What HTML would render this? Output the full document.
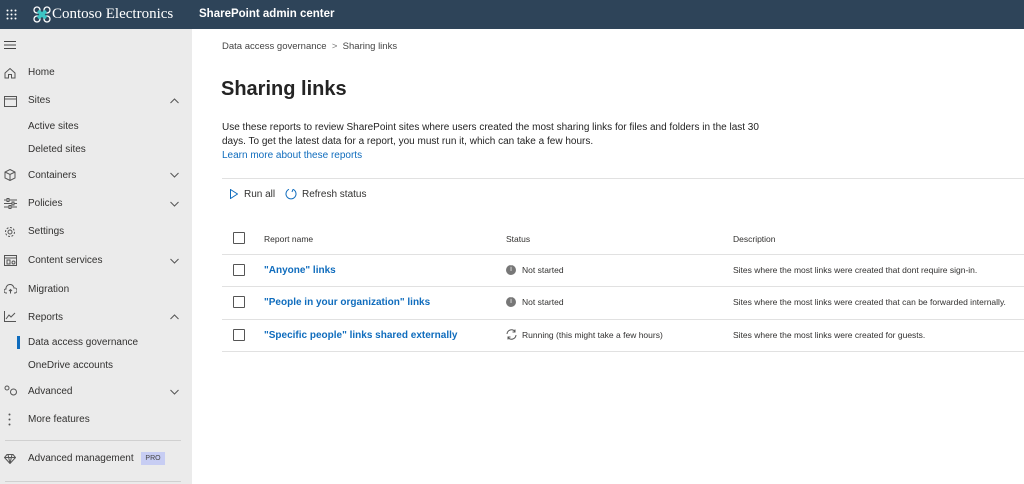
<html><head><style>
body{margin:0;width:1024px;height:484px;overflow:hidden;font-family:"Liberation Sans",sans-serif;background:#fff;position:relative}
.top{position:absolute;left:0;top:0;width:1024px;height:29px;background:#2e4459;color:#fff}
.side{position:absolute;left:0;top:29px;width:192px;height:455px;background:#ebebeb}
.a{position:absolute;white-space:nowrap}
.n{font-size:10px;color:#323130;left:28px}
.lk{color:#0f6cbd;font-weight:bold;font-size:10px;left:264px}
.cb{left:233px;width:10px;height:10px;border:1px solid #555;border-radius:1px}
.ln{left:222px;width:802px;height:1px;background:#e1e1e1}
.s{font-size:8.5px;color:#323130}
svg.i{position:absolute;left:4px}
</style></head><body>
<div class="top">
<svg class="a" style="left:6px;top:9px" width="11" height="11"><g fill="#fff"><circle cx="1.5" cy="1.5" r="1"/><circle cx="5.5" cy="1.5" r="1"/><circle cx="9.5" cy="1.5" r="1"/><circle cx="1.5" cy="5.5" r="1"/><circle cx="5.5" cy="5.5" r="1"/><circle cx="9.5" cy="5.5" r="1"/><circle cx="1.5" cy="9.5" r="1"/><circle cx="5.5" cy="9.5" r="1"/><circle cx="9.5" cy="9.5" r="1"/></g></svg>
<svg class="a" style="left:33px;top:6px" width="18" height="17" viewBox="0 0 18 17"><circle cx="4" cy="4" r="3" fill="none" stroke="#fff" stroke-width="1.3"/><circle cx="14" cy="4" r="3" fill="none" stroke="#fff" stroke-width="1.3"/><circle cx="4" cy="13" r="3" fill="none" stroke="#fff" stroke-width="1.3"/><circle cx="14" cy="13" r="3" fill="none" stroke="#fff" stroke-width="1.3"/><path d="M5 5L13 12M13 5L5 12" stroke="#3cc4c4" stroke-width="3.5"/></svg>
<div class="a" style="left:52px;top:6px;font-family:'Liberation Serif',serif;font-size:15px">Contoso Electronics</div>
<div class="a" style="left:199px;top:8px;font-size:11.5px;font-weight:bold">SharePoint admin center</div>
</div>
<div class="side"></div>
<svg class="i" style="top:41px" width="12" height="8"><path d="M0 .5H12M0 4H12M0 7.5H12" stroke="#444"/></svg>
<svg class="i" style="top:67px" width="12" height="12"><path d="M1 6L6 1.5 11 6V11H7.5V7.5H4.5V11H1Z" fill="none" stroke="#555"/></svg>
<div class="a n" style="top:67px">Home</div>
<svg class="i" style="top:96px" width="13" height="11"><rect x=".5" y=".5" width="12" height="10" fill="none" stroke="#555"/><path d="M.5 3H12.5" stroke="#555"/></svg>
<div class="a n" style="top:95px">Sites</div>
<div class="a n" style="top:121px">Active sites</div>
<div class="a n" style="top:144px">Deleted sites</div>
<svg class="i" style="top:169px" width="12" height="12"><path d="M6 .5L11 3V9L6 11.5 1 9V3Z M1 3L6 5.5 11 3M6 5.5V11.5" fill="none" stroke="#555"/></svg>
<div class="a n" style="top:170px">Containers</div>
<svg class="i" style="top:198px" width="13" height="11"><path d="M0 2H13M0 5.5H13M0 9H13" stroke="#555"/><rect x="3" y="0.5" width="2" height="3" fill="#ebebeb" stroke="#555"/><rect x="8" y="4" width="2" height="3" fill="#ebebeb" stroke="#555"/><rect x="5" y="7.5" width="2" height="3" fill="#ebebeb" stroke="#555"/></svg>
<div class="a n" style="top:198px">Policies</div>
<svg class="i" style="top:226px" width="12" height="12"><circle cx="6" cy="6" r="2" fill="none" stroke="#555"/><circle cx="6" cy="6" r="4.5" fill="none" stroke="#555" stroke-dasharray="2 1.5"/></svg>
<div class="a n" style="top:226px">Settings</div>
<svg class="i" style="top:255px" width="13" height="11"><rect x=".5" y=".5" width="12" height="10" fill="none" stroke="#555"/><path d="M.5 3H12.5M3 5H6V9H3Z" fill="none" stroke="#555"/><circle cx="9.5" cy="7.5" r="1.5" fill="none" stroke="#555"/></svg>
<div class="a n" style="top:255px">Content services</div>
<svg class="i" style="top:284px" width="13" height="10"><path d="M3 9H2A2 2 0 0 1 2 5 4 4 0 0 1 10 4 2.5 2.5 0 0 1 11 9H10M6.5 9.5V5.5M5 7L6.5 5.5 8 7" fill="none" stroke="#555"/></svg>
<div class="a n" style="top:284px">Migration</div>
<svg class="i" style="top:311px" width="12" height="11"><path d="M.5 0V10.5H12M2 8L5 4 7 6 11 2" fill="none" stroke="#555"/></svg>
<div class="a n" style="top:312px">Reports</div>
<div class="a" style="left:17px;top:336px;width:3px;height:13px;background:#0f6cbd"></div>
<div class="a n" style="top:337px">Data access governance</div>
<div class="a n" style="top:360px">OneDrive accounts</div>
<svg class="i" style="top:385px" width="14" height="11"><circle cx="3" cy="3" r="2" fill="none" stroke="#555"/><circle cx="9.5" cy="7" r="3" fill="none" stroke="#555"/></svg>
<div class="a n" style="top:386px">Advanced</div>
<svg class="i" style="top:413px;left:8px" width="3" height="13"><circle cx="1.5" cy="1.5" r="1" fill="#555"/><circle cx="1.5" cy="6.5" r="1" fill="#555"/><circle cx="1.5" cy="11.5" r="1" fill="#555"/></svg>
<div class="a n" style="top:414px">More features</div>
<div class="a" style="left:5px;top:440px;width:176px;height:1px;background:#d0d0d0"></div>
<svg class="i" style="top:454px" width="12" height="10"><path d="M3 .5H9L11.5 3.5 6 9.5 .5 3.5Z M.5 3.5H11.5M4 .5 6 9.5 8 .5" fill="none" stroke="#555"/></svg>
<div class="a n" style="top:453px">Advanced management</div>
<div class="a" style="left:141px;top:452px;width:24px;height:13px;background:#c7cdf3;color:#444;font-size:7px;text-align:center;line-height:13px">PRO</div>
<div class="a" style="left:5px;top:481px;width:176px;height:1px;background:#d0d0d0"></div>
<svg class="a" style="left:170px;top:98px" width="9" height="6"><path d="M.5 5L4.5 1 8.5 5" fill="none" stroke="#555"/></svg>
<svg class="a" style="left:170px;top:172px" width="9" height="6"><path d="M.5 1L4.5 5 8.5 1" fill="none" stroke="#555"/></svg>
<svg class="a" style="left:170px;top:201px" width="9" height="6"><path d="M.5 1L4.5 5 8.5 1" fill="none" stroke="#555"/></svg>
<svg class="a" style="left:170px;top:258px" width="9" height="6"><path d="M.5 1L4.5 5 8.5 1" fill="none" stroke="#555"/></svg>
<svg class="a" style="left:170px;top:314px" width="9" height="6"><path d="M.5 5L4.5 1 8.5 5" fill="none" stroke="#555"/></svg>
<svg class="a" style="left:170px;top:389px" width="9" height="6"><path d="M.5 1L4.5 5 8.5 1" fill="none" stroke="#555"/></svg>

<div class="a" style="left:222px;top:41px;font-size:9.5px;color:#444">Data access governance &nbsp;<span style="color:#777">&gt;</span>&nbsp; Sharing links</div>
<div class="a" style="left:221px;top:78px;font-size:20px;font-weight:bold;color:#242424">Sharing links</div>
<div class="a" style="left:222px;top:121px;font-size:10px;color:#242424;line-height:14px;white-space:normal;width:545px">Use these reports to review SharePoint sites where users created the most sharing links for files and folders in the last 30 days. To get the latest data for a report, you must run it, which can take a few hours.<br><span style="color:#0f6cbd">Learn more about these reports</span></div>
<div class="ln a" style="top:178px"></div>
<svg class="a" style="left:230px;top:189px" width="8" height="10"><path d="M.5 .5L7.5 5 .5 9.5Z" fill="none" stroke="#0f6cbd"/></svg>
<div class="a" style="left:244px;top:189px;font-size:10px;color:#323130">Run all</div>
<svg class="a" style="left:285px;top:188px" width="12" height="12"><path d="M4 1.3A5 5 0 1 0 8 1.3" fill="none" stroke="#0f6cbd"/><path d="M8 1.3L7 4" stroke="#0f6cbd"/></svg>
<div class="a" style="left:302px;top:189px;font-size:10px;color:#323130">Refresh status</div>
<div class="a cb" style="top:232px"></div>
<div class="a s" style="left:264px;top:234px">Report name</div>
<div class="a s" style="left:506px;top:234px">Status</div>
<div class="a s" style="left:733px;top:234px">Description</div>
<div class="ln a" style="top:254px"></div>
<div class="a cb" style="top:264px"></div><div class="a lk" style="top:265px">"Anyone" links</div>
<div class="a" style="left:506px;top:265px;width:10px;height:10px;border-radius:50%;background:#777;color:#fff;font-size:7px;text-align:center;line-height:10px">i</div><div class="a s" style="left:522px;top:265px">Not started</div>
<div class="a s" style="left:733px;top:265px">Sites where the most links were created that dont require sign-in.</div>
<div class="ln a" style="top:286px"></div>
<div class="a cb" style="top:296px"></div><div class="a lk" style="top:297px">"People in your organization" links</div>
<div class="a" style="left:506px;top:297px;width:10px;height:10px;border-radius:50%;background:#777;color:#fff;font-size:7px;text-align:center;line-height:10px">i</div><div class="a s" style="left:522px;top:297px">Not started</div>
<div class="a s" style="left:733px;top:297px">Sites where the most links were created that can be forwarded internally.</div>
<div class="ln a" style="top:319px"></div>
<div class="a cb" style="top:329px"></div><div class="a lk" style="top:330px">"Specific people" links shared externally</div>
<svg class="a" style="left:506px;top:329px" width="11" height="11"><path d="M1 5A4.5 4.5 0 0 1 9 2.5M10 6A4.5 4.5 0 0 1 2 8.5M9 .5V3H6.5M2 10.5V8H4.5" fill="none" stroke="#555"/></svg><div class="a s" style="left:522px;top:330px">Running (this might take a few hours)</div>
<div class="a s" style="left:733px;top:330px">Sites where the most links were created for guests.</div>
<div class="ln a" style="top:351px"></div>
</body></html>
